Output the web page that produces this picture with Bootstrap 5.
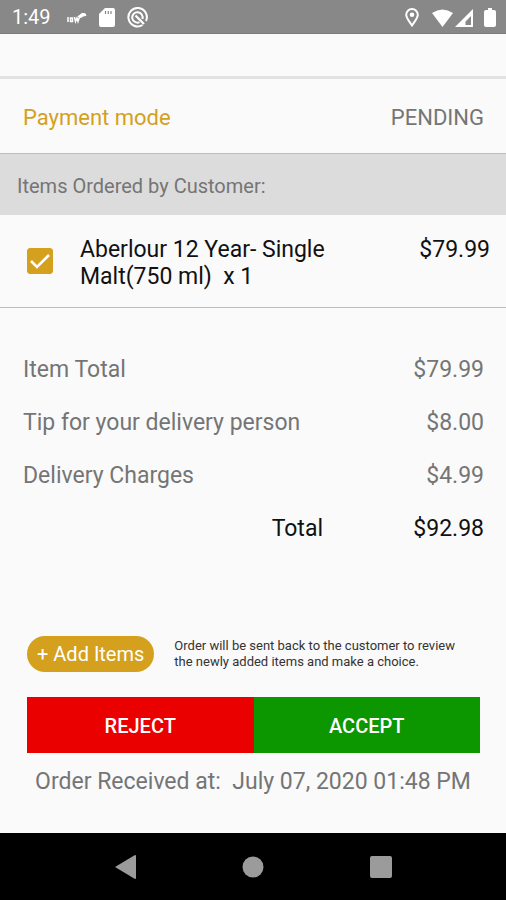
<!DOCTYPE html>
<html lang="en">
<head>
<meta charset="utf-8">
<meta name="viewport" content="width=device-width, initial-scale=1">
<title>Order details</title>
<link href="https://cdn.jsdelivr.net/npm/bootstrap@5.3.0/dist/css/bootstrap.min.css" rel="stylesheet">
<style>
  :root { --gold: #d4a01e; --ink: #111; --soft: #757575; }
  body { font-family: Roboto, "Liberation Sans", sans-serif; font-size: 23px; line-height: 27px; background: #fafafa; color: var(--soft); }
  .status-bar { background: #888; color: #fff; height: 34px; padding: 2px 10px 0 12px; font-size: 20px; border-bottom: 1px solid #7c7c7c; }
  .notices { gap: 12px; }
  .top-strip { height: 45px; border-bottom: 3px solid #e2e2e2; }
  .payment-row { font-size: 22px; padding: 25px 22px 22px 23px; border-bottom: 1px solid #bdbdbd; }
  .gold-text { color: var(--gold); }
  .band { background: #dcdcdc; font-size: 20px; line-height: 24px; padding: 20px 17px 17px; }
  .item-row { padding: 21px 16px 17px 27px; border-bottom: 1px solid #bdbdbd; color: var(--ink); }
  .item-row .form-check-input { width: 26px; height: 26px; border-radius: 3px; margin: 0 27px 4px 0; border-color: var(--gold); }
  .item-row .form-check-input:checked { background-color: var(--gold); border-color: var(--gold); background-size: 26px; background-image: url("data:image/svg+xml,%3Csvg xmlns='http://www.w3.org/2000/svg' viewBox='0 0 26 26'%3E%3Cpath fill='none' stroke='%23fff' stroke-width='2.600' d='M4 13l6 6L22 7'/%3E%3C/svg%3E"); }
  .item-name { max-width: 270px; }
  .totals { margin: 35px 0 81px; }
  .totals th, .totals td { font-weight: 400; padding: 13px 0; }
  .totals th { padding-left: 23px; }
  .totals td { width: 183px; padding-right: 22px; text-align: right; }
  .totals .sum { color: var(--ink); }
  .actions { margin: 0 26px 0 27px; }
  .add-row { gap: 20px; margin-bottom: 25px; }
  .add-btn, .add-btn:hover { background: var(--gold); color: #fff; font-size: 20px; line-height: 24px; padding: 6px 10px; border: 0; }
  .hint { font-size: 13px; line-height: 16px; color: #333; max-width: 300px; }
  .choice { height: 56px; font-size: 20px; border: 0; font-weight: 500; padding-top: 8px; }
  .reject, .reject:hover { background: #eb0000; color: #fff; }
  .accept, .accept:hover { background: #0c9600; color: #fff; }
  .received { margin: 15px 0 24px; }
  .nav-keys { background: #000; height: 67px; padding: 0 112px; }
  .nav-keys button { line-height: 0; }
</style>
<script defer src="https://cdn.jsdelivr.net/npm/bootstrap@5.3.0/dist/js/bootstrap.bundle.min.js"></script>
</head>
<body class="d-flex flex-column min-vh-100">
<header>
  <div class="status-bar d-flex align-items-center justify-content-between">
    <div class="notices d-flex align-items-center">
      <span class="me-1">1:49</span>
      <svg width="20" height="12" viewBox="0 0 20 12" fill="none" stroke="#fff" aria-hidden="true"><path stroke-width="1.500" d="M1 5v5M3.500 9.500V6h2v3.500zM7.500 5l1 4.500L10 6l1 3.500L12.500 5"/><path fill="#fff" stroke-width="1" d="M11 4.500 15 1.500h3l1 2-3 .5-2 1.500z"/></svg>
      <svg width="16" height="19" viewBox="0 0 16 19" aria-hidden="true"><path fill="#fff" d="M6 0h8q2 0 2 2v15q0 2-2 2H2q-2 0-2-2V6z"/><path stroke="#888" stroke-width="1.200" d="M6.500 3v3M9.300 3v3M12 3v3"/></svg>
      <svg width="21" height="21" viewBox="0 0 21 21" fill="none" stroke="#fff" aria-hidden="true"><path stroke-width="2" d="M15.500 18A9.200 9.200 0 1 1 19 14"/><path stroke-width="2" d="M12.500 15.200A5.200 5.200 0 1 1 15.400 12"/><path stroke-width="2.200" d="m8.500 8.500 8.500 8.500"/></svg>
    </div>
    <div class="d-flex align-items-center">
      <svg width="14" height="19" viewBox="0 0 14 19" fill="none" stroke="#fff" aria-hidden="true"><path stroke-width="2" d="M7 17.500C4 13 1.200 10 1.200 6.800a5.800 5.800 0 0 1 11.600 0C12.800 10 10 13 7 17.500z"/><circle cx="7" cy="6.800" r="2.300" fill="#fff" stroke="none"/></svg>
      <svg class="ms-2 me-2" width="49" height="18" viewBox="-5 0 49 18" fill="#fff" aria-hidden="true"><path d="M0 4Q10.500-3 21 4L10.500 18z"/><path fill-rule="evenodd" d="M23 18 41 0v18zM33.500 16H39V7l-5.500 5.500z"/></svg>
      <svg width="12" height="19" viewBox="0 0 12 19" fill="#fff" aria-hidden="true"><path d="M4 0h4v2h2q2 0 2 2v13q0 2-2 2H2q-2 0-2-2V4q0-2 2-2h2z"/></svg>
    </div>
  </div>
  <div class="top-strip"></div>
</header>
<main>
  <div class="payment-row d-flex justify-content-between">
    <span class="gold-text">Payment mode</span><span>PENDING</span>
  </div>
  <h1 class="band fw-normal mb-0">Items Ordered by Customer:</h1>
  <div class="item-row d-flex">
    <input class="form-check-input flex-shrink-0 align-self-center" type="checkbox" id="item1" checked>
    <label class="item-name" for="item1">Aberlour 12 Year- Single Malt(750 ml)&nbsp; x 1</label>
    <span class="ms-auto">$79.99</span>
  </div>
  <table class="totals w-100">
    <tbody>
      <tr><th scope="row">Item Total</th><td>$79.99</td></tr>
      <tr><th scope="row">Tip for your delivery person</th><td>$8.00</td></tr>
      <tr><th scope="row">Delivery Charges</th><td>$4.99</td></tr>
      <tr class="sum"><th scope="row" class="text-end">Total</th><td>$92.98</td></tr>
    </tbody>
  </table>
  <div class="actions">
    <div class="add-row d-flex align-items-center">
      <button type="button" class="btn add-btn rounded-pill text-nowrap">+ Add Items</button>
      <p class="hint mb-0">Order will be sent back to the customer to review the newly added items and make a choice.</p>
    </div>
    <div class="d-flex">
      <button type="button" class="btn choice reject rounded-0 flex-fill w-50">REJECT</button>
      <button type="button" class="btn choice accept rounded-0 flex-fill w-50">ACCEPT</button>
    </div>
  </div>
  <p class="received text-center">Order Received at:&nbsp; July 07, 2020 01:48 PM</p>
</main>
<nav class="nav-keys mt-auto d-flex justify-content-between align-items-center" aria-label="System">
  <button type="button" class="btn p-0 border-0" aria-label="Back"><svg width="26" height="26" viewBox="0 0 26 26"><path fill="#9b9b9b" d="M3 13 23 1q1 0 1 1v22q0 1-1 1z"/></svg></button>
  <button type="button" class="btn p-0 border-0" aria-label="Home"><svg width="22" height="22" viewBox="0 0 22 22"><circle cx="11" cy="11" r="10.500" fill="#9b9b9b"/></svg></button>
  <button type="button" class="btn p-0 border-0" aria-label="Recents"><svg width="26" height="26" viewBox="0 0 26 26"><rect x="2" y="2" width="22" height="22" rx="2" fill="#9b9b9b"/></svg></button>
</nav>
</body>
</html>
